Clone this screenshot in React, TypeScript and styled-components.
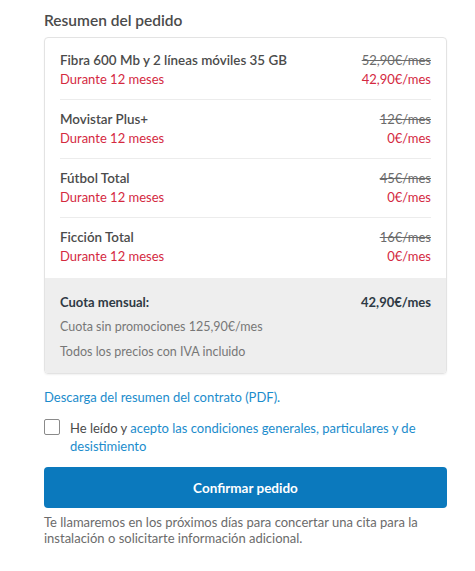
import React, { useState } from 'react';
import styled, { createGlobalStyle } from 'styled-components';

const GlobalStyle = createGlobalStyle`
  body {
    margin: 0;
    background: #ffffff;
    font-family: Lato, "Open Sans", Arial, sans-serif;
    color: #4b4b4b;
  }
`;

interface Item {
  name: string;
  oldPrice: string;
  price: string;
}

const items: Item[] = [
  { name: 'Fibra 600 Mb y 2 líneas móviles 35 GB', oldPrice: '52,90€/mes', price: '42,90€/mes' },
  { name: 'Movistar Plus+', oldPrice: '12€/mes', price: '0€/mes' },
  { name: 'Fútbol Total', oldPrice: '45€/mes', price: '0€/mes' },
  { name: 'Ficción Total', oldPrice: '16€/mes', price: '0€/mes' },
];

const Page = styled.div`
  width: 403px;
  padding: 10px 0 30px 44px;
`;

const Title = styled.h2`
  margin: 0 0 7px;
  font-size: 15.5px;
  line-height: 20px;
  font-weight: 600;
  color: #4b4b4b;
`;

const Card = styled.div`
  border: 1px solid #e3e3e3;
  border-radius: 4px;
  overflow: hidden;
  box-shadow: 0 1px 2px rgba(0, 0, 0, 0.06);
`;

const List = styled.div`
  padding: 3px 15px 2px;
`;

const Row = styled.div<{ $last?: boolean }>`
  display: grid;
  grid-template-columns: 1fr auto;
  padding: 10px 0 10px;
  border-bottom: ${(p) => (p.$last ? 'none' : '1px solid #ececec')};
  font-size: 13px;
  line-height: 19px;
`;

const Name = styled.span`
  font-weight: 600;
  font-size: 13.4px;
  color: #4b4b4b;
`;

const OldPrice = styled.span`
  text-align: right;
  color: #6b6b6b;
  text-decoration: line-through;
`;

const Promo = styled.span<{ $right?: boolean }>`
  color: #d4293f;
  text-align: ${(p) => (p.$right ? 'right' : 'left')};
`;

const Totals = styled.div`
  background: #eeeeee;
  padding: 14px 15px 11px;
  display: flex;
  flex-direction: column;
  gap: 5px;
`;

const TotalRow = styled.div`
  display: flex;
  justify-content: space-between;
  font-size: 13px;
  line-height: 20px;
  font-weight: 700;
  color: #2f3a45;
`;

const Note = styled.div`
  font-size: 12.5px;
  line-height: 20px;
  color: #777777;
`;

const PdfLink = styled.a`
  display: block;
  margin-top: 14px;
  font-size: 13px;
  line-height: 18px;
  color: #1b8ccc;
  text-decoration: none;
  cursor: pointer;
`;

const CheckRow = styled.label`
  display: flex;
  align-items: flex-start;
  gap: 10px;
  margin-top: 13px;
  font-size: 13px;
  line-height: 18px;
  color: #4b4b4b;
  cursor: pointer;
`;

const Box = styled.span<{ $checked: boolean }>`
  flex: none;
  width: 16px;
  height: 16px;
  border: 1px solid #8a8a8a;
  border-radius: 2px;
  box-sizing: border-box;
  background: ${(p) => (p.$checked ? '#0b7abf' : '#fff')};
`;

const CheckText = styled.span`
  flex: 1;
  padding-right: 6px;
`;

const Link = styled.span`
  color: #1b8ccc;
`;

const Button = styled.button`
  display: block;
  width: 100%;
  height: 41px;
  margin-top: 12px;
  border: none;
  border-radius: 4px;
  background: #0b79bd;
  color: #ffffff;
  font-family: inherit;
  font-size: 13.5px;
  font-weight: 700;
  cursor: pointer;
`;

const Footer = styled.p`
  margin: 6px 0 0;
  font-size: 13px;
  line-height: 16px;
  color: #6b6b6b;
`;

export default function App() {
  const [accepted, setAccepted] = useState(false);

  return (
    <>
      <GlobalStyle />
      <Page>
        <Title>Resumen del pedido</Title>
        <Card>
          <List>
            {items.map((item, i) => (
              <Row key={item.name} $last={i === items.length - 1}>
                <Name>{item.name}</Name>
                <OldPrice>{item.oldPrice}</OldPrice>
                <Promo>Durante 12 meses</Promo>
                <Promo $right>{item.price}</Promo>
              </Row>
            ))}
          </List>
          <Totals>
            <TotalRow>
              <span>Cuota mensual:</span>
              <span>42,90€/mes</span>
            </TotalRow>
            <Note>Cuota sin promociones 125,90€/mes</Note>
            <Note>Todos los precios con IVA incluido</Note>
          </Totals>
        </Card>
        <PdfLink>Descarga del resumen del contrato (PDF).</PdfLink>
        <CheckRow onClick={() => setAccepted(!accepted)}>
          <Box $checked={accepted} />
          <CheckText>
            He leído y <Link>acepto las condiciones generales, particulares y de desistimiento</Link>
          </CheckText>
        </CheckRow>
        <Button>Confirmar pedido</Button>
        <Footer>
          Te llamaremos en los próximos días para concertar una cita para la instalación o solicitarte
          información adicional.
        </Footer>
      </Page>
    </>
  );
}
